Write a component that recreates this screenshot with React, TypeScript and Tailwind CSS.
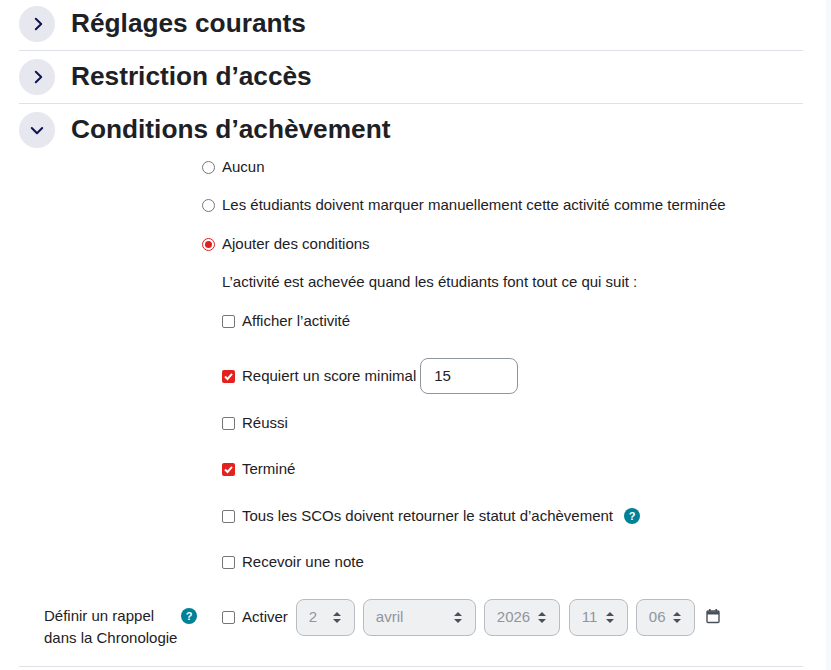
import React from "react";

function Chevron({ down }: { down?: boolean }) {
  return (
    <div className="w-9 h-9 rounded-full bg-[#e7e7ef] flex items-center justify-center shrink-0">
      <svg width="16" height="16" viewBox="0 0 16 16" fill="none" stroke="#0f1450" strokeWidth="2" strokeLinecap="round" strokeLinejoin="round">
        {down ? <path d="M2.8 6 L8 11.2 L13.2 6" /> : <path d="M6.8 2.8 L12.2 8 L6.8 13.2" />}
      </svg>
    </div>
  );
}

function Section({ title, down, cls }: { title: string; down?: boolean; cls: string }) {
  return (
    <div className={`${cls} flex items-start`}>
      <Chevron down={down} />
      <h3 className="ml-4 text-[26.25px] leading-[35px] font-bold text-[#1d2125]">{title}</h3>
    </div>
  );
}

function Radio({ checked }: { checked?: boolean }) {
  return (
    <span className={checked ? "w-[13px] h-[13px] rounded-full border border-[#d8201f] flex items-center justify-center shrink-0" : "w-[13px] h-[13px] rounded-full border border-[#767676] shrink-0"}>
      {checked && <span className="w-[7px] h-[7px] rounded-full bg-[#e0201f]" />}
    </span>
  );
}

function Check({ checked }: { checked?: boolean }) {
  return checked ? (
    <span className="w-[13px] h-[13px] rounded-[2px] bg-[#e3211f] flex items-center justify-center shrink-0">
      <svg width="11" height="11" viewBox="0 0 11 11" fill="none" stroke="#fff" strokeWidth="2">
        <path d="M2 5.5 L4.5 8 L9 2.8" />
      </svg>
    </span>
  ) : (
    <span className="w-[13px] h-[13px] rounded-[2px] border border-[#767676] shrink-0" />
  );
}

function Help() {
  return (
    <span className="w-4 h-4 rounded-full bg-[#008196] text-white text-[11px] font-bold flex items-center justify-center shrink-0">?</span>
  );
}

function Row({ h, children }: { h: string; children: React.ReactNode }) {
  return <div className={`${h} flex items-center`}>{children}</div>;
}

function Arrows() {
  return (
    <svg width="8" height="11" viewBox="0 0 8 11" fill="#495057" className="shrink-0">
      <path d="M4 0 L8 4 H0 Z M4 11 L0 7 H8 Z" />
    </svg>
  );
}

function Select({ value, w }: { value: string; w: string }) {
  return (
    <div className={`${w} h-[37px] rounded-lg border border-[#b8bcc2] bg-[#eff0f2] text-[#8f959e] flex items-center justify-between pl-3 pr-[13px]`}>
      <span>{value}</span>
      <Arrows />
    </div>
  );
}

export default function App() {
  return (
    <div className="w-[831px] h-[670px] overflow-hidden bg-white text-[15px] text-[#1d2125] font-['Liberation_Sans',Arial,sans-serif] flex">
      <main className="w-[784px] ml-[19px]">
        <Section title="Réglages courants" cls="h-[51px] border-b border-[#dee2e6] pt-[6px]" />
        <Section title="Restriction d’accès" cls="h-[53px] border-b border-[#dee2e6] pt-[8px]" />
        <Section title="Conditions d’achèvement" down cls="h-[51px] pt-[8px]" />

        <div className="pl-[183px]">
          <Row h="h-[24px]"><Radio /><span className="ml-[7px]">Aucun</span></Row>
          <Row h="h-[24px] mt-[14px]"><Radio /><span className="ml-[7px]">Les étudiants doivent marquer manuellement cette activité comme terminée</span></Row>
          <Row h="h-[24px] mt-[15px]"><Radio checked /><span className="ml-[7px]">Ajouter des conditions</span></Row>

          <div className="pl-[20px]">
            <Row h="h-[24px] mt-[14px]"><span>L’activité est achevée quand les étudiants font tout ce qui suit :</span></Row>
            <Row h="h-[24px] mt-[15px]"><Check /><span className="ml-[7px]">Afficher l’activité</span></Row>
            <Row h="h-[36px] mt-[25px]">
              <Check checked />
              <span className="ml-[7px]">Requiert un score minimal</span>
              <div className="ml-[4px] w-[98px] h-[36px] rounded-lg border border-[#8f959e] flex items-center pl-[13px]">15</div>
            </Row>
            <Row h="h-[24px] mt-[17px]"><Check /><span className="ml-[7px]">Réussi</span></Row>
            <Row h="h-[24px] mt-[22px]"><Check checked /><span className="ml-[7px]">Terminé</span></Row>
            <Row h="h-[24px] mt-[23px]">
              <Check /><span className="ml-[7px]">Tous les SCOs doivent retourner le statut d’achèvement</span>
              <span className="ml-[11px]"><Help /></span>
            </Row>
            <Row h="h-[24px] mt-[22px]"><Check /><span className="ml-[7px]">Recevoir une note</span></Row>
          </div>
        </div>

        <div className="mt-[25px] h-[68px] border-b border-[#dee2e6] flex items-start pl-[25px]">
          <div className="w-[153px] flex items-start justify-between leading-[22px] pt-[6px]">
            <span className="whitespace-nowrap">Définir un rappel<br />dans la Chronologie</span>
            <span className="mt-[3px]"><Help /></span>
          </div>
          <div className="ml-[25px] flex items-center">
            <Check /><span className="ml-[7px]">Activer</span>
            <Select value="2" w="w-[59px] ml-2" />
            <Select value="avril" w="w-[113px] ml-2" />
            <Select value="2026" w="w-[76px] ml-2" />
            <Select value="11" w="w-[59px] ml-[9px]" />
            <Select value="06" w="w-[59px] ml-2" />
            <svg width="14" height="16" viewBox="0 0 14 16" className="ml-[11px] -mt-[3px]" fill="none">
              <rect x="1" y="3" width="12" height="11.5" rx="1" stroke="#495057" strokeWidth="1.4" />
              <path d="M1 3.5 H13 V6.5 H1 Z" fill="#495057" />
              <path d="M3.8 1 V3.5 M10.2 1 V3.5" stroke="#495057" strokeWidth="1.6" />
            </svg>
          </div>
        </div>
      </main>
      <div className="ml-[23px] flex-1 bg-[#f8f9fa]" />
    </div>
  );
}
